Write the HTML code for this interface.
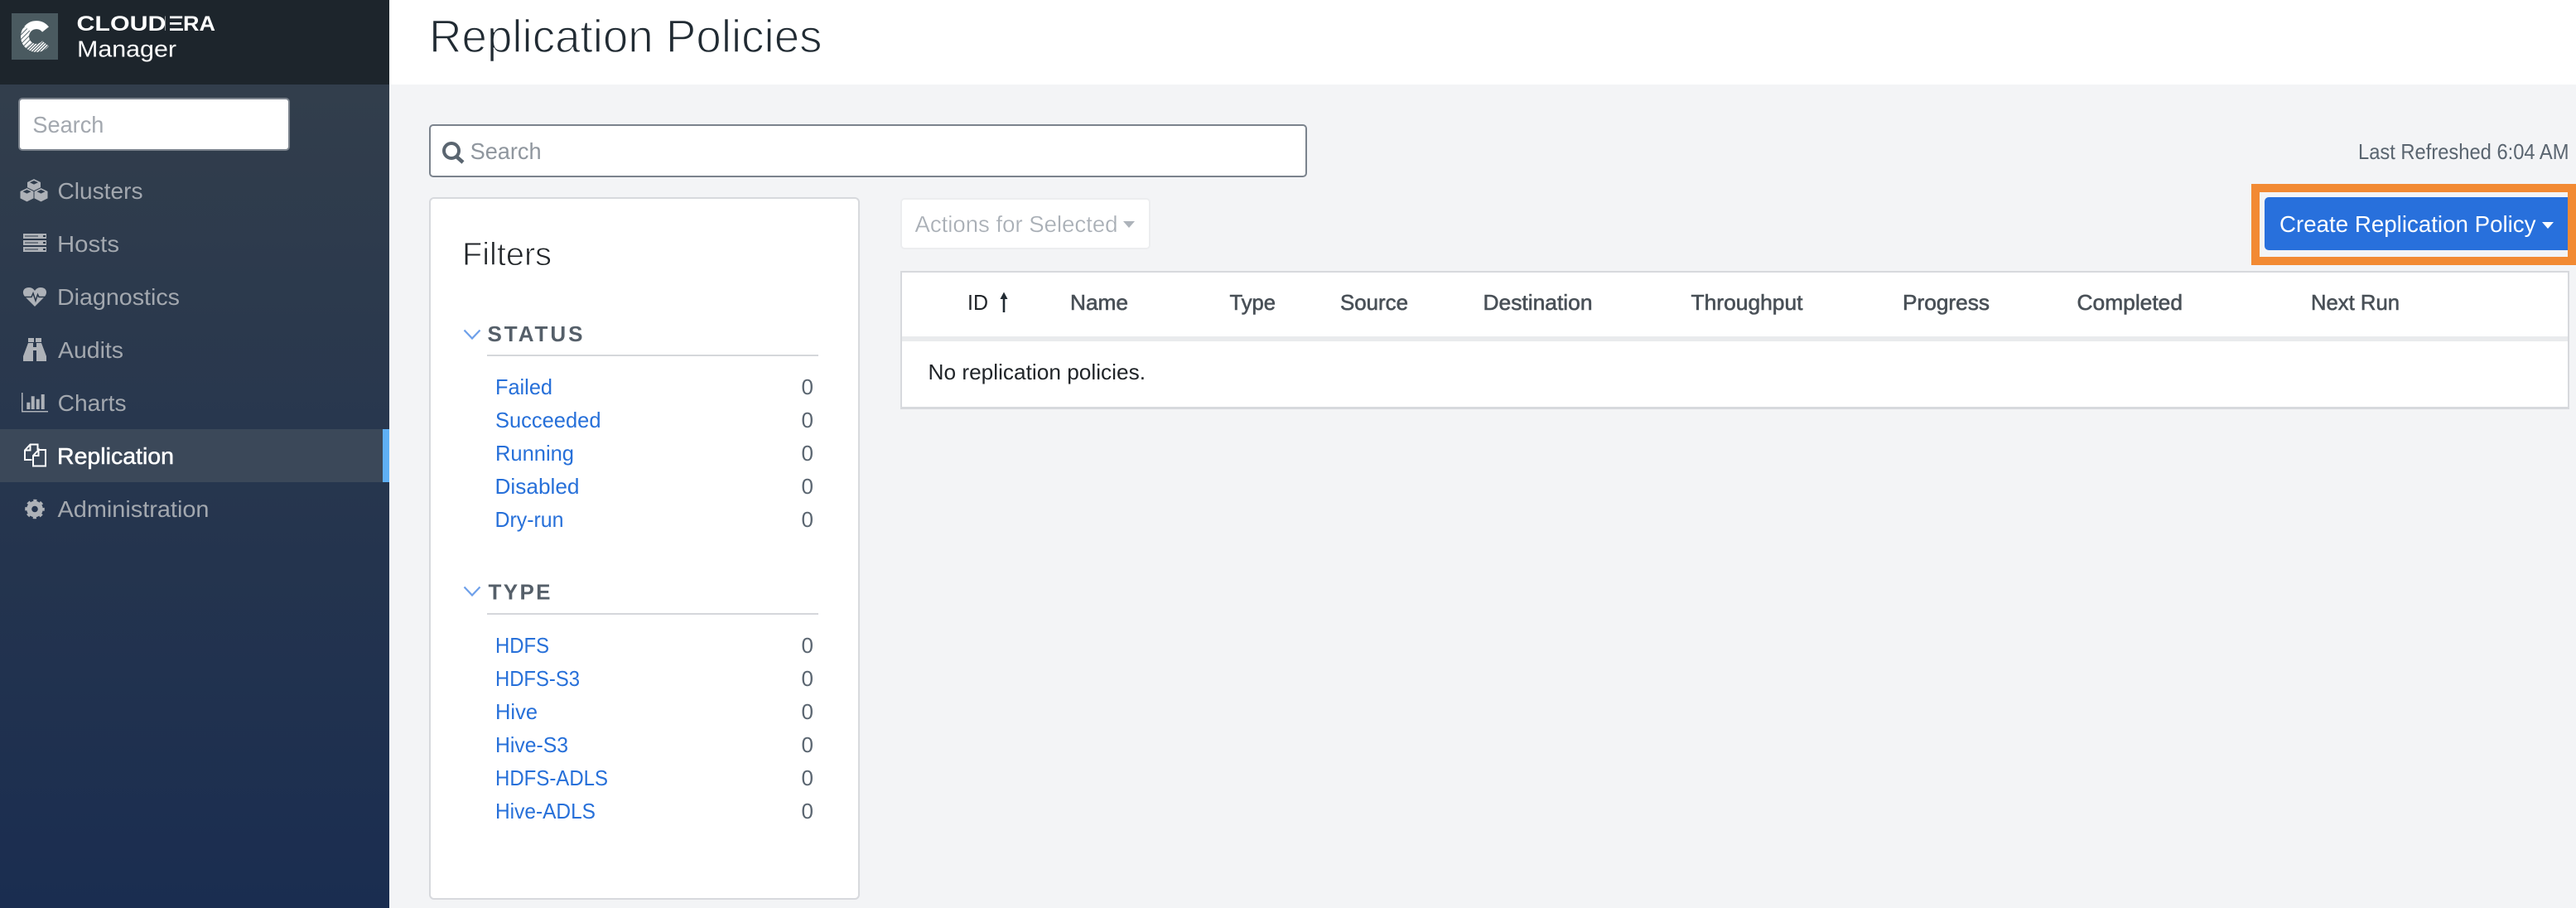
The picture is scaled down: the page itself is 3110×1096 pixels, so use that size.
<!DOCTYPE html>
<html><head><meta charset="utf-8"><title>Replication Policies</title>
<style>
html,body{margin:0;padding:0;width:3110px;height:1096px;overflow:hidden;background:#f3f4f6;font-family:"Liberation Sans",Arial,sans-serif}
.a{position:absolute;box-sizing:border-box}
svg{position:absolute;left:0;top:0}
text{font-family:"Liberation Sans",Arial,sans-serif;font-size:28px}
.n{fill:#a3a8af}
.l{fill:#2770d9;font-size:26px}
.c{fill:#5a6570;font-size:26px}
.h{fill:#495057;font-size:26px;stroke:#495057;stroke-width:.6px}
.s{fill:#555f69;font-weight:bold;font-size:26px}
</style></head><body>
<div class="a" style="left:0;top:0;width:470px;height:102px;background:#1d252c"></div>
<div class="a" style="left:0;top:102px;width:470px;height:994px;background:linear-gradient(#323e4c,#1a2d50)"></div>
<div class="a" style="left:470px;top:0;width:2640px;height:102px;background:#fff"></div>
<div class="a" style="left:14px;top:16px;width:56px;height:56px;background:#4a5a60"></div>
<div class="a" style="left:22px;top:118px;width:328px;height:64px;background:#fff;border:2px solid #7b838d;border-radius:5px"></div>
<div class="a" style="left:0;top:518px;width:470px;height:64px;background:#3b4859"></div>
<div class="a" style="left:462px;top:518px;width:8px;height:64px;background:#5fb0f5"></div>
<div class="a" style="left:518px;top:150px;width:1060px;height:64px;background:#fff;border:2px solid #7b838d;border-radius:5px"></div>
<div class="a" style="left:518px;top:238px;width:520px;height:848px;background:#fff;border:2px solid #d7d9dd;border-radius:6px"></div>
<div class="a" style="left:588px;top:428px;width:400px;height:2px;background:#d5d7db"></div>
<div class="a" style="left:588px;top:740px;width:400px;height:2px;background:#d5d7db"></div>
<div class="a" style="left:1087px;top:239px;width:302px;height:62px;background:#fff;border:2px solid #ecedef;border-radius:5px"></div>
<div class="a" style="left:1356px;top:267px;width:0;height:0;border-left:7.5px solid transparent;border-right:7.5px solid transparent;border-top:8px solid #adb3ba"></div>
<div class="a" style="left:1087px;top:327px;width:2015px;height:167px;background:#fff;border:2px solid #d7d9dd;border-bottom-width:3px"></div>
<div class="a" style="left:1089px;top:406px;width:2011px;height:6px;background:#e9ebed"></div>
<div class="a" style="left:2718px;top:222px;width:392px;height:98px;border:10px solid #f28a33"></div>
<div class="a" style="left:2734px;top:238px;width:366px;height:64px;background:#2870dc;border-radius:5px 0 0 5px"></div>
<div class="a" style="left:3068.5px;top:268px;width:0;height:0;border-left:7.5px solid transparent;border-right:7.5px solid transparent;border-top:8px solid #fff"></div>

<svg width="3110" height="1096" viewBox="0 0 3110 1096">
<defs>
<pattern id="st" width="4" height="4" patternUnits="userSpaceOnUse" patternTransform="rotate(-45 0 0)"><rect width="4" height="3.1" fill="#fff"/></pattern>
<pattern id="st2" width="2.6" height="2.6" patternUnits="userSpaceOnUse" patternTransform="rotate(-45 0 0)"><rect width="2.6" height="1.5" fill="#fff"/></pattern>
</defs>
<!-- logo mark -->
<path d="M55 35.500A14 14 0 0 0 33.300 35" fill="none" stroke="#fff" stroke-width="10"/>
<path d="M33.300 35A14 14 0 0 0 35 54.700" fill="none" stroke="url(#st)" stroke-width="10"/>
<path d="M35 54.700A14 14 0 0 0 55 52.500" fill="none" stroke="url(#st2)" stroke-width="10"/>

<!-- cubes -->
<g fill="#aeb2b8" stroke="#2f3c4c" stroke-width="1">
<path d="M41 215.500l8.500 4.200v9l-8.500 4.300-8.500-4.300v-9z"/>
<path d="M32.500 226.500l8.500 4.200v9l-8.500 4.300-8.500-4.300v-9z"/>
<path d="M49.500 226.500l8.500 4.200v9l-8.500 4.300-8.500-4.300v-9z"/>
</g>
<g fill="#2f3c4c">
<path d="M41 218l5 2.300-5 2.300-5-2.300z"/>
<path d="M32.500 229l5 2.300-5 2.300-5-2.300z"/>
<path d="M49.500 229l5 2.300-5 2.300-5-2.300z"/>
</g>
<!-- hosts -->
<path d="M28 282h28v6H28zM28 290h28v6H28zM28 298h28v6H28z" fill="#aeb2b8"/>
<path d="M30 284.500h16v1H30zM30 292.500h16v1H30zM30 300.500h16v1H30z M52 284h3v2h-3zM52 292h3v2h-3zM52 300h3v2h-3z" fill="#2d3a4a"/>
<!-- heart -->
<path d="M42 370L30 358C26 353 28 347 35 347C38 347 40.500 348.500 42 351C43.500 348.500 46 347 49 347C56 347 58 353 54 358Z" fill="#aeb2b8"/>
<path d="M29 358.500H38L40 354L43 363L45.500 355.500L47 358.500H55" fill="none" stroke="#2b394a" stroke-width="1.500"/>
<!-- binoculars -->
<path d="M34 408h7v5h-7zM43 408h7v5h-7zM34 414h6v5h4v-5h6l6 16v6H44V423h-4v13H28v-6z" fill="#aeb2b8"/>
<!-- charts -->
<path d="M26.750 474v22.750H58" fill="none" stroke="#aeb2b8" stroke-width="1.500"/>
<path d="M32.300 485.700h4V494h-4zM37.700 478.300h4V494h-4zM43.700 481.700h4V494h-4zM49.700 476h4v18h-4z" fill="#aeb2b8"/>
<!-- replication -->
<path d="M38.500 555H30V543.500L36.500 536.500H45.500V543M30 543.500H36.500V536.500" fill="none" stroke="#fff" stroke-width="2"/>
<path d="M46.500 543H55V562.500H40V550L46.500 543V550H40" fill="none" stroke="#fff" stroke-width="2"/>
<!-- gear -->
<g fill="none" stroke="#aeb2b8">
<circle cx="42" cy="614.500" r="6.800" stroke-width="6"/>
<circle cx="42" cy="614.500" r="10.300" stroke-width="3" stroke-dasharray="4.100 3.990" stroke-dashoffset="2"/>
</g>
<!-- search icon -->
<circle cx="545" cy="182" r="9" fill="none" stroke="#5a6570" stroke-width="4"/>
<path d="M551 189l8 7" stroke="#5a6570" stroke-width="4.500" fill="none"/>
<!-- chevrons -->
<path d="M560.500 398.500l9.500 10 9.500-10M560.500 708.500l9.500 10 9.500-10" fill="none" stroke="#6ea0ea" stroke-width="2.200"/>
<!-- sort arrow -->
<path d="M1212 377V358" stroke="#212b33" stroke-width="2.600" fill="none"/><path d="M1212 352.500l-4.500 8.500h9z" fill="#212b33"/>

<!-- logo text -->
<text x="92.500" y="37" textLength="108" lengthAdjust="spacingAndGlyphs" style="font-size:25px;font-weight:bold" fill="#fff">CLOUD</text>
<text x="196.500" y="37" textLength="26" lengthAdjust="spacingAndGlyphs" style="font-size:25px;font-weight:bold" fill="#fff">E</text>
<rect x="199.600" y="18" width="5.400" height="20" fill="#1d252c"/>
<text x="221" y="37" textLength="39" lengthAdjust="spacingAndGlyphs" style="font-size:25px;font-weight:bold" fill="#fff">RA</text>
<text x="93" y="68.500" textLength="120" lengthAdjust="spacingAndGlyphs" fill="#fff">Manager</text>

<text x="39.400" y="160" textLength="86" lengthAdjust="spacingAndGlyphs" fill="#a3a8af">Search</text>
<text class="n" x="69.500" y="240" textLength="103" lengthAdjust="spacingAndGlyphs">Clusters</text>
<text class="n" x="69" y="304" textLength="75" lengthAdjust="spacingAndGlyphs">Hosts</text>
<text class="n" x="69" y="368" textLength="148" lengthAdjust="spacingAndGlyphs">Diagnostics</text>
<text class="n" x="70" y="432" textLength="79" lengthAdjust="spacingAndGlyphs">Audits</text>
<text class="n" x="69.600" y="496" textLength="83" lengthAdjust="spacingAndGlyphs">Charts</text>
<text x="69" y="560" textLength="141" lengthAdjust="spacingAndGlyphs" fill="#fff" stroke="#fff" stroke-width=".5">Replication</text>
<text class="n" x="69.500" y="624" textLength="183" lengthAdjust="spacingAndGlyphs">Administration</text>

<text x="518" y="63" textLength="474.500" lengthAdjust="spacingAndGlyphs" style="font-size:56px" fill="#212b33" stroke="#fff" stroke-width="1.400">Replication Policies</text>
<text x="567.600" y="192" textLength="86" lengthAdjust="spacingAndGlyphs" fill="#8f969e">Search</text>
<text x="558" y="320" textLength="108" lengthAdjust="spacingAndGlyphs" style="font-size:39px" fill="#212529" stroke="#fff" stroke-width=".9">Filters</text>

<text class="s" x="588.500" y="412" textLength="115" lengthAdjust="spacing">STATUS</text>
<text class="l" x="598" y="476" textLength="69" lengthAdjust="spacingAndGlyphs">Failed</text><text class="c" x="967.500" y="476">0</text>
<text class="l" x="598" y="516" textLength="127.500" lengthAdjust="spacingAndGlyphs">Succeeded</text><text class="c" x="967.500" y="516">0</text>
<text class="l" x="598" y="556" textLength="95" lengthAdjust="spacingAndGlyphs">Running</text><text class="c" x="967.500" y="556">0</text>
<text class="l" x="597.500" y="596" textLength="102" lengthAdjust="spacingAndGlyphs">Disabled</text><text class="c" x="967.500" y="596">0</text>
<text class="l" x="597.500" y="636" textLength="83" lengthAdjust="spacingAndGlyphs">Dry-run</text><text class="c" x="967.500" y="636">0</text>

<text class="s" x="589.500" y="723.500" textLength="75" lengthAdjust="spacing">TYPE</text>
<text class="l" x="598" y="788" textLength="65" lengthAdjust="spacingAndGlyphs">HDFS</text><text class="c" x="967.500" y="788">0</text>
<text class="l" x="598" y="828" textLength="102" lengthAdjust="spacingAndGlyphs">HDFS-S3</text><text class="c" x="967.500" y="828">0</text>
<text class="l" x="598" y="868" textLength="51" lengthAdjust="spacingAndGlyphs">Hive</text><text class="c" x="967.500" y="868">0</text>
<text class="l" x="598" y="908" textLength="88" lengthAdjust="spacingAndGlyphs">Hive-S3</text><text class="c" x="967.500" y="908">0</text>
<text class="l" x="598" y="948" textLength="136" lengthAdjust="spacingAndGlyphs">HDFS-ADLS</text><text class="c" x="967.500" y="948">0</text>
<text class="l" x="598" y="988" textLength="121" lengthAdjust="spacingAndGlyphs">Hive-ADLS</text><text class="c" x="967.500" y="988">0</text>

<text x="1104.500" y="280" textLength="245" lengthAdjust="spacingAndGlyphs" fill="#a9afb6" stroke="#fff" stroke-width=".3">Actions for Selected</text>

<text x="1168" y="374" textLength="25" lengthAdjust="spacingAndGlyphs" style="font-size:26px" fill="#212529">ID</text>
<text class="h" x="1292" y="374" textLength="70" lengthAdjust="spacingAndGlyphs">Name</text>
<text class="h" x="1484.500" y="374" textLength="55.500" lengthAdjust="spacingAndGlyphs">Type</text>
<text class="h" x="1618" y="374" textLength="82" lengthAdjust="spacingAndGlyphs">Source</text>
<text class="h" x="1790.500" y="374" textLength="132" lengthAdjust="spacingAndGlyphs">Destination</text>
<text class="h" x="2041.500" y="374" textLength="135" lengthAdjust="spacingAndGlyphs">Throughput</text>
<text class="h" x="2297" y="374" textLength="105" lengthAdjust="spacingAndGlyphs">Progress</text>
<text class="h" x="2507.500" y="374" textLength="127.500" lengthAdjust="spacingAndGlyphs">Completed</text>
<text class="h" x="2790" y="374" textLength="107" lengthAdjust="spacingAndGlyphs">Next Run</text>
<text x="1120.500" y="458" textLength="262.500" lengthAdjust="spacingAndGlyphs" style="font-size:26px" fill="#212529">No replication policies.</text>

<text x="2847" y="192" textLength="254.500" lengthAdjust="spacingAndGlyphs" style="font-size:26px" fill="#5a6570">Last Refreshed 6:04 AM</text>
<text x="2752" y="280" textLength="309.500" lengthAdjust="spacingAndGlyphs" fill="#fff">Create Replication Policy</text>
</svg>
</body></html>
